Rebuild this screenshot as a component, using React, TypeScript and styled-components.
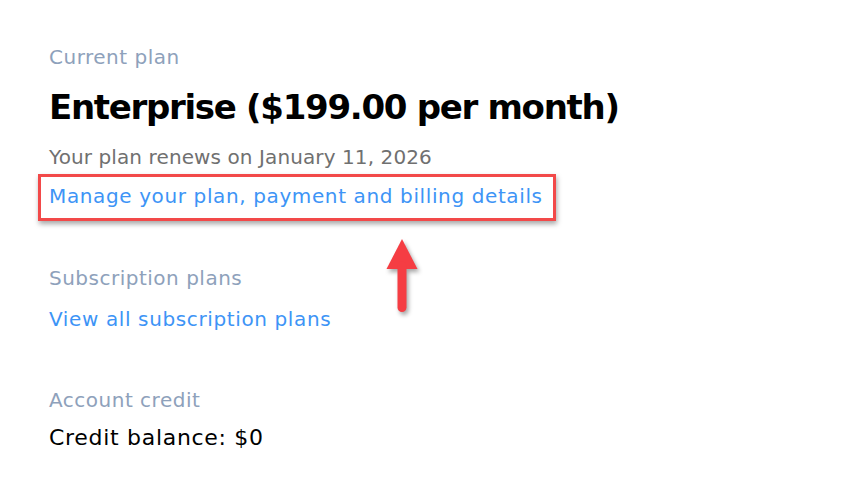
import React from 'react'
import styled, { createGlobalStyle } from 'styled-components'

const GlobalStyle = createGlobalStyle`
  html, body {
    margin: 0;
    padding: 0;
    background: #ffffff;
  }
  body {
    font-family: "DejaVu Sans", "Noto Sans", sans-serif;
  }
`

const Page = styled.div`
  position: relative;
  width: 857px;
  height: 504px;
  box-sizing: border-box;
  padding: 44px 0 0 49px;
  overflow: hidden;
`

const Section = styled.section<{ gap?: number }>`
  display: flex;
  flex-direction: column;
  align-items: flex-start;
  margin-bottom: ${({ gap }) => (gap ?? 0) + 'px'};
`

const Label = styled.div`
  font-size: 20px;
  line-height: 26px;
  color: #8ea1bb;
  letter-spacing: 0.5px;
`

const PlanTitle = styled.h1`
  margin: 16px 0 0;
  font-size: 34px;
  line-height: 42px;
  font-weight: 700;
  color: #000;
  letter-spacing: -1.3px;
`

const Muted = styled.div`
  margin-top: 16px;
  font-size: 20px;
  line-height: 26px;
  color: #707070;
  letter-spacing: 0.1px;
`

const Highlight = styled.div`
  margin: 4px 0 0 -11px;
  padding: 6px 10px 9px 8px;
  border: 3px solid #f24949;
  box-shadow: 1px 3px 5px rgba(0, 0, 0, 0.35);
`

const Link = styled.a<{ top?: number }>`
  display: block;
  margin-top: ${({ top }) => (top ?? 0) + 'px'};
  font-size: 20px;
  line-height: 26px;
  color: #3d94f6;
  text-decoration: none;
  letter-spacing: 0.62px;
  cursor: pointer;
`

const Body = styled.div`
  margin-top: 11px;
  font-size: 22px;
  line-height: 28px;
  color: #000;
  letter-spacing: 0.7px;
`

const Arrow = styled.svg`
  position: absolute;
  left: 384px;
  top: 236px;
  filter: drop-shadow(2px 3px 2px rgba(0, 0, 0, 0.35));
`

export default function App() {
  return (
    <>
      <GlobalStyle />
      <Page>
        <Section gap={44}>
          <Label>Current plan</Label>
          <PlanTitle>Enterprise ($199.00 per month)</PlanTitle>
          <Muted>Your plan renews on January 11, 2026</Muted>
          <Highlight>
            <Link>Manage your plan, payment and billing details</Link>
          </Highlight>
        </Section>
        <Section gap={55}>
          <Label>Subscription plans</Label>
          <Link top={15}>View all subscription plans</Link>
        </Section>
        <Section>
          <Label>Account credit</Label>
          <Body>Credit balance: $0</Body>
        </Section>
        <Arrow width="36" height="82" viewBox="0 0 36 82">
          <path d="M18 3 L33.5 33 L2.5 33 Z" fill="#f53d43" />
          <line x1="18" y1="30" x2="18" y2="71.5" stroke="#f53d43" strokeWidth="9" strokeLinecap="round" />
        </Arrow>
      </Page>
    </>
  )
}
